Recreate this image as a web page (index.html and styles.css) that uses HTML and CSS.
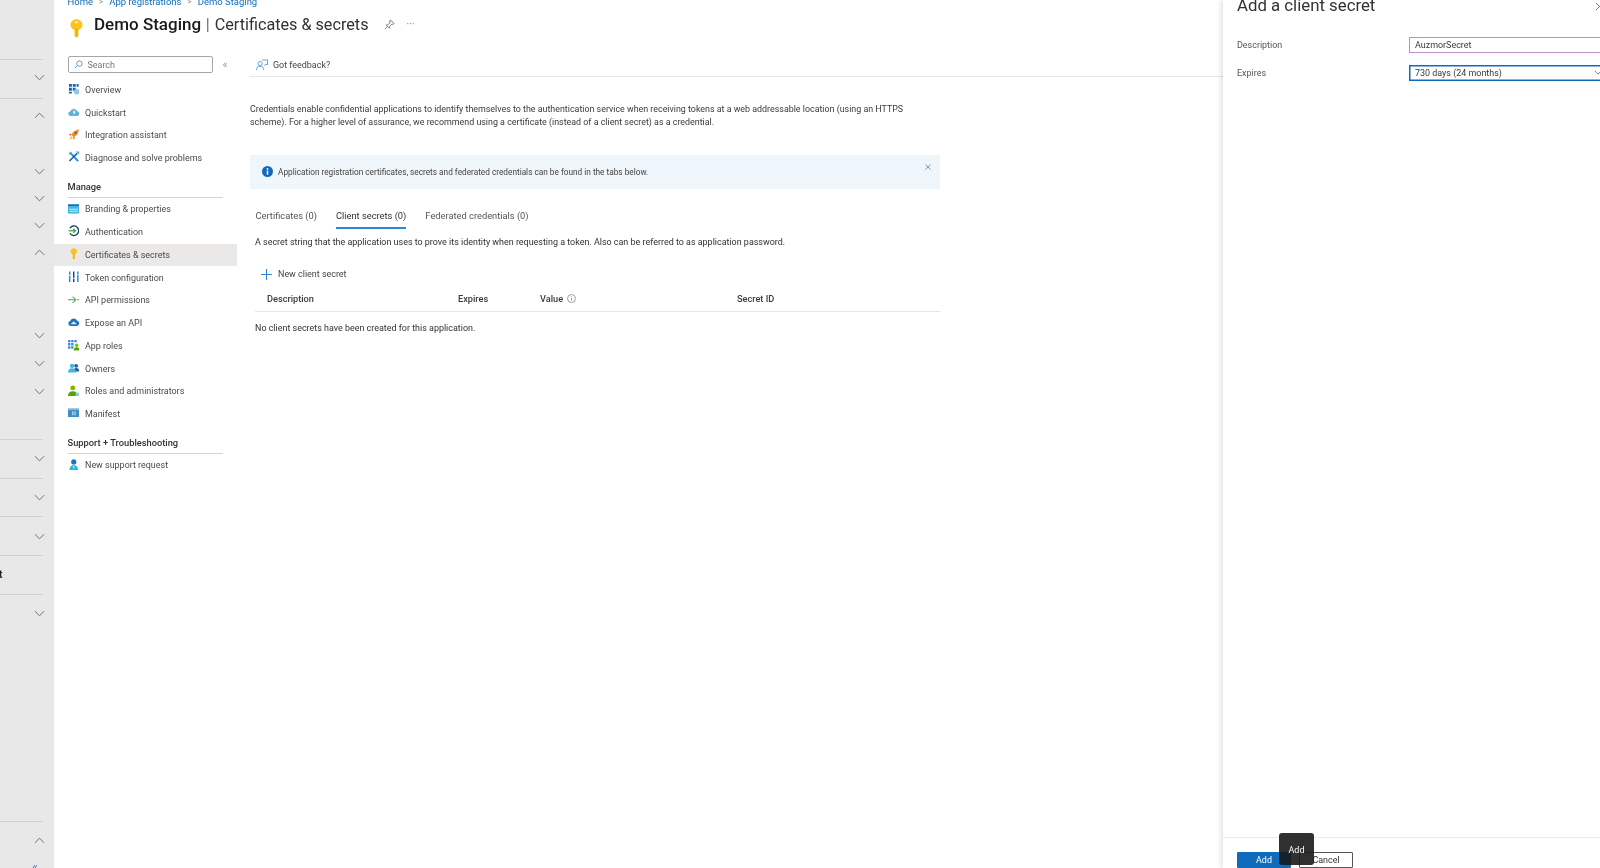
FILE: index.html
```html
<!DOCTYPE html>
<html lang="en">
<head>
<meta charset="UTF-8">
<meta name="viewport" content="width=device-width, initial-scale=1.0">
<title>Certificates &amp; secrets</title>
<link rel="stylesheet" href="styles.css">
</head>
<body>

<!-- Collapsed portal menu -->
<aside class="rail">
    <div class="rail-row rail-tall rail-line rail-first"><svg class="chev" viewBox="0 0 12 7"><path d="M1 1l5 5 5-5"/></svg></div>
    <div class="rail-row rail-mid rail-line"><svg class="chev" viewBox="0 0 12 7"><path d="M1 6l5-5 5 5"/></svg></div>
    <div class="rail-row rail-short rail-gap-a"><svg class="chev" viewBox="0 0 12 7"><path d="M1 1l5 5 5-5"/></svg></div>
    <div class="rail-row rail-short"><svg class="chev" viewBox="0 0 12 7"><path d="M1 1l5 5 5-5"/></svg></div>
    <div class="rail-row rail-short"><svg class="chev" viewBox="0 0 12 7"><path d="M1 1l5 5 5-5"/></svg></div>
    <div class="rail-row rail-short"><svg class="chev" viewBox="0 0 12 7"><path d="M1 6l5-5 5 5"/></svg></div>
    <div class="rail-row rail-wide rail-gap-b"><svg class="chev" viewBox="0 0 12 7"><path d="M1 1l5 5 5-5"/></svg></div>
    <div class="rail-row rail-wide"><svg class="chev" viewBox="0 0 12 7"><path d="M1 1l5 5 5-5"/></svg></div>
    <div class="rail-row rail-wide"><svg class="chev" viewBox="0 0 12 7"><path d="M1 1l5 5 5-5"/></svg></div>
    <div class="rail-row rail-tall rail-line rail-gap-c"><svg class="chev" viewBox="0 0 12 7"><path d="M1 1l5 5 5-5"/></svg></div>
    <div class="rail-row rail-tall rail-line"><svg class="chev" viewBox="0 0 12 7"><path d="M1 1l5 5 5-5"/></svg></div>
    <div class="rail-row rail-tall rail-line"><svg class="chev" viewBox="0 0 12 7"><path d="M1 1l5 5 5-5"/></svg></div>
    <div class="rail-row rail-tall rail-line"><span class="rail-cut">t</span></div>
    <div class="rail-row rail-tall rail-line"><svg class="chev" viewBox="0 0 12 7"><path d="M1 1l5 5 5-5"/></svg></div>
    <div class="rail-row rail-tall rail-line rail-gap-d"><svg class="chev" viewBox="0 0 12 7"><path d="M1 6l5-5 5 5"/></svg></div>
    <div class="rail-collapse">«</div>
</aside>

<main class="main">
    <nav class="crumbs">
        <a href="#">Home</a><span class="crumb-sep">&gt;</span>
        <a href="#">App registrations</a><span class="crumb-sep">&gt;</span>
        <a href="#">Demo Staging</a>
    </nav>

    <header class="page-title">
        <svg class="title-key" viewBox="0 0 14 20">
            <path d="M7 0c3.500 0 6.500 2.800 6.500 6S10.500 12 7 12 .5 9.200.5 6 3.500 0 7 0z" fill="#fcc419"/>
            <circle cx="7" cy="3.200" r="1.300" fill="#fff3c4"/>
            <path d="M5 10h4v8l-2 2-2-2z" fill="#f7b500"/>
        </svg>
        <h1><strong>Demo Staging</strong> <span class="bar">|</span> Certificates &amp; secrets</h1>
        <svg class="title-pin" viewBox="0 0 12 12"><path d="M7 1l4 4-1 .6-2 .4-2 2.400-.2 1.600L2.400 6.600 4 6.400 6.400 4.400 6.500 2zM4 8l-3 3"/></svg>
        <span class="title-more">···</span>
    </header>

    <div class="columns">
        <nav class="side">
            <div class="side-top">
                <div class="search">
                    <svg viewBox="0 0 10 10"><circle cx="6" cy="4" r="3"/><path d="M3.800 6.200L1 9"/></svg>
                    <span>Search</span>
                </div>
                <span class="side-collapse">«</span>
            </div>

            <a class="side-item" href="#">
                <svg viewBox="0 0 12 12"><path fill="#1b5fa8" d="M1 1h3v3H1zM5 1h3v3H5zM9 1h2v3H9zM1 5h3v3H1zM5 5h3v3H5zM1 9h3v2H1z"/><circle cx="9" cy="9" r="2.800" fill="#8cc8ee"/></svg>
                Overview
            </a>
            <a class="side-item" href="#">
                <svg viewBox="0 0 12 12"><path fill="#59b4d9" d="M3 10.500a2.500 2.500 0 0 1-.4-5A3.500 3.500 0 0 1 9.400 5.500a2.500 2.500 0 0 1-.4 5z"/><path fill="#fff" d="M6.500 3.500L5 7h1.300L5.500 10 8 6H6.600z"/></svg>
                Quickstart
            </a>
            <a class="side-item" href="#">
                <svg viewBox="0 0 12 12"><path fill="#f28c1e" d="M11.500.5C8 .8 5.500 2.500 3.500 6l2.500 2.500c3.500-2 5.200-4.500 5.500-8z"/><path fill="#f7c325" d="M3 7l2 2-3.500 2.500z"/><circle cx="8" cy="4" r="1.100" fill="#0f6cbd"/><path fill="#d9541e" d="M1 6l2.500-1.500L3 7zM6 11l1.500-2.500L5 9z"/></svg>
                Integration assistant
            </a>
            <a class="side-item" href="#">
                <svg viewBox="0 0 12 12"><path stroke="#1b8fd6" stroke-width="2" d="M2 1.500l8.500 9"/><path stroke="#1b5fa8" stroke-width="1.600" d="M9.500 2.500l-8 8"/><path fill="#3fb7e0" d="M8 .5h3.500V4L10 2.500z"/><path fill="#3fb7e0" d="M.5 3L3 .5 4 2 2 4z"/></svg>
                Diagnose and solve problems
            </a>

            <h3 class="side-head">Manage</h3>
            <a class="side-item" href="#">
                <svg viewBox="0 0 12 12"><path fill="#3fb7e0" d="M0 1.500h12v9.500H0z"/><path fill="#1b5fa8" d="M0 1.500h12V3H0z"/><path fill="#c9ecf8" d="M1.500 6h9v1h-9zM1.500 8h9v1h-9z"/></svg>
                Branding &amp; properties
            </a>
            <a class="side-item" href="#">
                <svg viewBox="0 0 12 12"><path fill="none" stroke="#1a3f6f" stroke-width="1.400" d="M2 3.200A5 5 0 1 1 2 8.800"/><path fill="none" stroke="#3fae49" stroke-width="1.400" d="M.5 6h7"/><path fill="none" stroke="#3fae49" stroke-width="1.400" d="M5.500 3.800L7.800 6 5.500 8.200"/></svg>
                Authentication
            </a>
            <a class="side-item side-active" href="#">
                <svg viewBox="0 0 12 14"><circle cx="6" cy="4" r="3.800" fill="#fcc419"/><path d="M4.800 7h2.400v5.500L6 14l-1.200-1.500z" fill="#f7b500"/></svg>
                Certificates &amp; secrets
            </a>
            <a class="side-item" href="#">
                <svg viewBox="0 0 12 12"><path fill="#1b8fd6" d="M1 .5h1.500v11H1z"/><path fill="#1a3f6f" d="M5.200.5h1.500v11H5.200z"/><path fill="#1b8fd6" d="M9.500.5H11v11H9.500z"/><path fill="#fff" d="M1 4h1.500v1H1zM5.200 7h1.500v1H5.200zM9.500 3h1.500v1H9.500z"/></svg>
                Token configuration
            </a>
            <a class="side-item" href="#">
                <svg viewBox="0 0 12 12"><path fill="none" stroke="#59b4d9" stroke-width="1" d="M4.500 3a3 3 0 1 1 0 6"/><path fill="none" stroke="#57a300" stroke-width="1" d="M0 6h8M5.800 4L8 6 5.800 8"/><path stroke="#7a8a99" stroke-width="1" d="M9 6h3"/></svg>
                API permissions
            </a>
            <a class="side-item" href="#">
                <svg viewBox="0 0 12 12"><path fill="#1b73c4" d="M3 10.500a2.800 2.800 0 0 1-.5-5.500A3.700 3.700 0 0 1 9.500 5a2.800 2.800 0 0 1-.5 5.500z"/><path fill="#cfe8f8" d="M2.500 8.500L6 5.500l3.500 3z"/></svg>
                Expose an API
            </a>
            <a class="side-item" href="#">
                <svg viewBox="0 0 12 12"><path fill="#3f8fd0" d="M0 1h2.500v2.500H0zM3.300 1h2.500v2.500H3.300zM6.600 1h2.500v2.500H6.600zM0 4.300h2.500v2.500H0zM3.300 4.300h2.500v2.500H3.300zM0 7.600h2.500v2.500H0zM3.300 7.600h2.500v2.500H3.300z"/><circle cx="9" cy="6.500" r="1.800" fill="#7fba00"/><path fill="#57a300" d="M6 12c0-2.500 1.200-3.500 3-3.500s3 1 3 3.500z"/></svg>
                App roles
            </a>
            <a class="side-item" href="#">
                <svg viewBox="0 0 12 12"><circle cx="8.500" cy="4" r="2" fill="#1b5fa8"/><path fill="#1b5fa8" d="M5.500 10c0-2.500 1.300-3.800 3-3.800S12 7.500 12 10z"/><circle cx="4.200" cy="4" r="2.300" fill="#3fb7e0"/><path fill="#3fb7e0" d="M0 11c0-3 1.800-4.500 4.200-4.500S8.400 8 8.400 11z"/></svg>
                Owners
            </a>
            <a class="side-item" href="#">
                <svg viewBox="0 0 12 12"><circle cx="5" cy="3" r="2.600" fill="#7fba00"/><path fill="#57a300" d="M0 11.500c0-3.500 2-5 5-5s5 1.500 5 5z"/><path fill="#8cc8ee" d="M8 8h4v3.500H8z"/></svg>
                Roles and administrators
            </a>
            <a class="side-item" href="#">
                <svg viewBox="0 0 12 12"><path fill="#3f8fc4" d="M0 1.500h12v9H0z"/><path fill="#a8d3ec" d="M0 1.500h12v1.300H0z"/><path fill="#d9edf8" d="M4.500 4.500h1v4h-1zM6.800 4.500h1v4h-1z"/></svg>
                Manifest
            </a>

            <h3 class="side-head">Support + Troubleshooting</h3>
            <a class="side-item" href="#">
                <svg viewBox="0 0 12 12"><circle cx="6" cy="3" r="2.700" fill="#1b73c4"/><path fill="#22b8dd" d="M1.500 12c0-4 2-5.800 4.500-5.800s4.500 1.800 4.500 5.800z"/><path fill="#fff" d="M5.500 7h1v3h-1z"/></svg>
                New support request
            </a>
        </nav>

        <section class="pane">
            <div class="toolbar">
                <svg viewBox="0 0 13 13"><circle cx="4.500" cy="5" r="2.300"/><path d="M.7 12c0-2.800 1.500-4.200 3.800-4.200s3.800 1.400 3.800 4.200M6.500 1h6v5H10L8.700 7.300"/></svg>
                <span>Got feedback?</span>
            </div>

            <p class="intro">Credentials enable confidential applications to identify themselves to the authentication service when receiving tokens at a web addressable location (using an HTTPS scheme). For a higher level of assurance, we recommend using a certificate (instead of a client secret) as a credential.</p>

            <div class="banner">
                <svg class="banner-icon" viewBox="0 0 12 12"><circle cx="6" cy="6" r="6" fill="#0f6cbd"/><path fill="#fff" d="M5.200 5h1.600v4.500H5.200z"/><circle cx="6" cy="3.200" r="1" fill="#fff"/></svg>
                <span>Application registration certificates, secrets and federated credentials can be found in the tabs below.</span>
                <svg class="banner-close" viewBox="0 0 7 7"><path d="M.5.500l6 6M6.500.500l-6 6"/></svg>
            </div>

            <div class="tabs">
                <a class="tab" href="#">Certificates (0)</a>
                <a class="tab tab-active" href="#">Client secrets (0)</a>
                <a class="tab" href="#">Federated credentials (0)</a>
            </div>

            <p class="tab-note">A secret string that the application uses to prove its identity when requesting a token. Also can be referred to as application password.</p>

            <button class="new-secret" type="button">
                <svg viewBox="0 0 11 11"><path d="M5.500 0v11M0 5.500h11"/></svg>
                New client secret
            </button>

            <div class="secret-head">
                <span>Description</span>
                <span>Expires</span>
                <span class="value-col">Value <svg viewBox="0 0 9 9"><circle cx="4.500" cy="4.500" r="4"/><path d="M4.500 4v2.500M4.500 2.300v.8"/></svg></span>
                <span>Secret ID</span>
            </div>
            <p class="secret-empty">No client secrets have been created for this application.</p>
        </section>
    </div>
</main>

<!-- Slide-in panel -->
<section class="panel">
    <h2>Add a client secret</h2>
    <svg class="panel-close" viewBox="0 0 10 10"><path d="M1 1l8 8M9 1l-8 8"/></svg>

    <div class="form">
        <label>Description</label>
        <div class="field field-desc">AuzmorSecret</div>
        <label>Expires</label>
        <div class="field field-select">730 days (24 months)<svg viewBox="0 0 10 6"><path d="M1 1l4 4 4-4"/></svg></div>
    </div>

    <div class="panel-foot">
        <button class="btn btn-add" type="button">Add</button>
        <button class="btn btn-cancel" type="button">Cancel</button>
        <div class="tooltip">Add</div>
    </div>
</section>

</body>
</html>
```

FILE: styles.css
```css
* {
    box-sizing: border-box;
}

html,
body {
    height: 868px;
    margin: 0;
    overflow: hidden;
}

body {
    display: flex;
    position: relative;
    font-family: Roboto, "Open Sans", sans-serif;
    font-size: 8.95px;
    color: #323130;
    background-color: #fff;
    filter: blur(0.5px);
}

a {
    text-decoration: none;
    color: inherit;
}

h1,
h2,
h3,
p {
    margin: 0;
    font-weight: normal;
}

/* Left rail */
.rail {
    flex: 0 0 54px;
    position: relative;
    padding-top: 59px;
    background-color: #e8e8e8;
}

.rail-row {
    display: flex;
    align-items: center;
    justify-content: flex-end;
    width: 43px;
    position: relative;
}

.rail-tall {
    height: 38.7px;
}

.rail-first {
    padding-bottom: 3px;
}

.rail-mid {
    height: 35px;
}

.rail-short {
    height: 27.2px;
}

.rail-wide {
    height: 28px;
}

.rail-line {
    border-top: 1px solid #d2d2d2;
}

.rail-gap-a {
    margin-top: 25px;
}

.rail-gap-b {
    margin-top: 55px;
}

.rail-gap-c {
    margin-top: 33.5px;
}

.rail-gap-d {
    margin-top: 188.5px;
}

.chev {
    width: 11px;
    height: 7px;
    margin-right: -2px;
    fill: none;
    stroke: #666;
    stroke-width: 1;
}

.rail-cut {
    position: absolute;
    left: -1px;
    font-size: 10px;
    font-weight: 700;
    color: #222;
}

.rail-collapse {
    position: absolute;
    top: 860px;
    left: 32px;
    font-size: 13px;
    line-height: 13px;
    color: #3a8ad6;
}

/* Main column */
.main {
    flex: 1;
    min-width: 0;
}

.crumbs {
    display: flex;
    align-items: center;
    height: 12px;
    margin-top: -5px;
    padding-left: 13.5px;
    font-size: 9.5px;
    color: #0f6cbd;
}

.crumb-sep {
    margin: 0 6px;
    font-size: 8px;
    color: #888;
}

.page-title {
    display: flex;
    align-items: center;
    height: 35px;
    padding-left: 16px;
}

.title-key {
    width: 13px;
    height: 19px;
    margin-top: 8px;
    margin-right: 11px;
}

.page-title h1 {
    margin-bottom: 1px;
    font-size: 16.2px;
    color: #323130;
    white-space: nowrap;
}

.page-title strong {
    font-size: 17px;
    font-weight: 500;
    color: #1b1a19;
}

.bar {
    margin: 0 1px;
    font-weight: 300;
    color: #222;
}

.title-pin {
    width: 11px;
    height: 11px;
    margin-left: 15px;
    fill: none;
    stroke: #555;
    stroke-width: 0.8;
}

.title-more {
    margin-left: 12px;
    font-size: 10px;
    color: #777;
}

.columns {
    display: flex;
}

/* Resource menu */
.side {
    flex: 0 0 183px;
}

.side-top {
    display: flex;
    align-items: center;
    height: 21px;
    margin-top: 12px;
    margin-bottom: 3.5px;
    padding-left: 13.5px;
}

.search {
    display: flex;
    align-items: center;
    gap: 5px;
    width: 145px;
    height: 17px;
    padding-left: 5px;
    border: 1px solid #a6a6a6;
    border-radius: 2px;
    color: #777;
}

.search svg {
    width: 9px;
    height: 9px;
    fill: none;
    stroke: #3a8ad6;
    stroke-width: 0.9;
}

.side-collapse {
    margin-left: 10px;
    font-size: 11px;
    color: #999;
}

.side-item {
    display: flex;
    align-items: center;
    gap: 6px;
    height: 22.75px;
    padding-left: 13.5px;
    color: #4a4a4a;
    white-space: nowrap;
}

.side-item svg {
    flex: 0 0 11.5px;
    width: 11.5px;
    height: 11.5px;
    margin-top: -2px;
}

.side-active {
    background-color: #ebe9e7;
}

.side-head {
    height: 20.5px;
    margin: 8px 14px 0 13.5px;
    padding-top: 3px;
    border-bottom: 1px solid #d2d2d2;
    font-size: 9.3px;
    font-weight: 500;
    color: #323130;
}

/* Content pane */
.pane {
    flex: 1;
    padding-left: 13px;
}

.toolbar {
    display: flex;
    align-items: center;
    gap: 5px;
    height: 24px;
    margin-top: 11px;
    padding-left: 6px;
    border-bottom: 1px solid #e6e6e6;
    color: #444;
}

.toolbar svg {
    width: 12px;
    height: 12px;
    fill: none;
    stroke: #2b88d8;
    stroke-width: 0.8;
}

.intro {
    width: 660px;
    margin-top: 25.5px;
    font-size: 8.9px;
    line-height: 13.3px;
    color: #3b3a39;
}

.banner {
    display: flex;
    align-items: center;
    position: relative;
    width: 690px;
    height: 34px;
    margin-top: 25.9px;
    padding-left: 12px;
    background-color: #eff6fc;
    font-size: 8.25px;
    color: #444;
}

.banner span {
    padding-top: 1px;
}

.banner-icon {
    width: 11px;
    height: 11px;
    margin-right: 5px;
}

.banner-close {
    position: absolute;
    top: 9px;
    right: 9px;
    width: 6px;
    height: 6px;
    fill: none;
    stroke: #666;
    stroke-width: 0.8;
}

.tabs {
    display: flex;
    gap: 19px;
    height: 23px;
    margin-top: 17px;
    padding-left: 5.5px;
    font-size: 9.3px;
    color: #555;
}

.tab {
    padding-top: 4px;
}

.tab-active {
    border-bottom: 2px solid #2b88d8;
    color: #323130;
}

.tab-note {
    margin-top: 7.5px;
    padding-left: 5px;
    line-height: 13px;
}

.new-secret {
    display: flex;
    align-items: center;
    gap: 6px;
    height: 20px;
    margin-top: 15px;
    margin-bottom: 1.5px;
    margin-left: 11px;
    padding: 0;
    border: none;
    background: none;
    font: inherit;
    color: #444;
}

.new-secret svg {
    width: 11px;
    height: 11px;
    fill: none;
    stroke: #2b88d8;
    stroke-width: 1;
}

.secret-head {
    display: grid;
    grid-template-columns: 191px 82px 197px 1fr;
    align-items: center;
    width: 685px;
    height: 26px;
    margin-left: 5px;
    padding-left: 12px;
    border-bottom: 1px solid #e6e6e6;
    font-size: 9.2px;
    font-weight: 500;
    color: #3b3a39;
}

.value-col svg {
    width: 9px;
    height: 9px;
    margin-left: 2px;
    vertical-align: -1px;
    fill: none;
    stroke: #777;
    stroke-width: 0.7;
}

.secret-empty {
    margin-top: 10px;
    padding-left: 5px;
    line-height: 13px;
}

/* Right panel, over the page */
.panel {
    position: absolute;
    top: 0;
    right: 0;
    bottom: 0;
    width: 377px;
    background-color: #fff;
    box-shadow: -2px 0 5px rgba(0, 0, 0, 0.12);
}

.panel h2 {
    margin-top: -6px;
    padding-left: 14px;
    font-size: 16.8px;
    line-height: 22px;
    color: #323130;
}

.panel-close {
    position: absolute;
    top: 2px;
    right: -4px;
    width: 9px;
    height: 9px;
    fill: none;
    stroke: #666;
    stroke-width: 1;
}

.form {
    display: grid;
    grid-template-columns: 172px 1fr;
    row-gap: 12.5px;
    align-items: center;
    margin-top: 20.5px;
    padding-left: 14px;
}

.form label {
    color: #555;
}

.field {
    display: flex;
    align-items: center;
    position: relative;
    height: 16px;
    margin-right: -3px;
    padding-left: 5px;
    border: 1px solid #b88fc9;
    color: #3b3a39;
}

.field-select {
    border: 1px solid #0f6cbd;
    box-shadow: inset 0 0 0 0.5px #0f6cbd;
}

.field-select svg {
    position: absolute;
    top: 4px;
    right: 0;
    width: 8px;
    height: 5px;
    fill: none;
    stroke: #555;
    stroke-width: 0.9;
}

.panel-foot {
    position: absolute;
    top: 837px;
    left: 0;
    right: 0;
    display: flex;
    gap: 8px;
    height: 31px;
    padding: 14px 0 0 14px;
    border-top: 1px solid #eaeaea;
}

.btn {
    width: 54px;
    height: 16px;
    padding: 0;
    font: inherit;
    border-radius: 1px;
}

.btn-add {
    border: none;
    background-color: #0f6cbd;
    color: #fff;
}

.btn-cancel {
    border: 1px solid #555;
    background-color: #fff;
    color: #323130;
}

.tooltip {
    position: absolute;
    top: -5px;
    left: 56px;
    display: flex;
    align-items: center;
    justify-content: center;
    width: 35px;
    height: 32px;
    padding-top: 2px;
    border-radius: 3px;
    background-color: rgba(26, 26, 26, 0.9);
    color: #fff;
}
```
